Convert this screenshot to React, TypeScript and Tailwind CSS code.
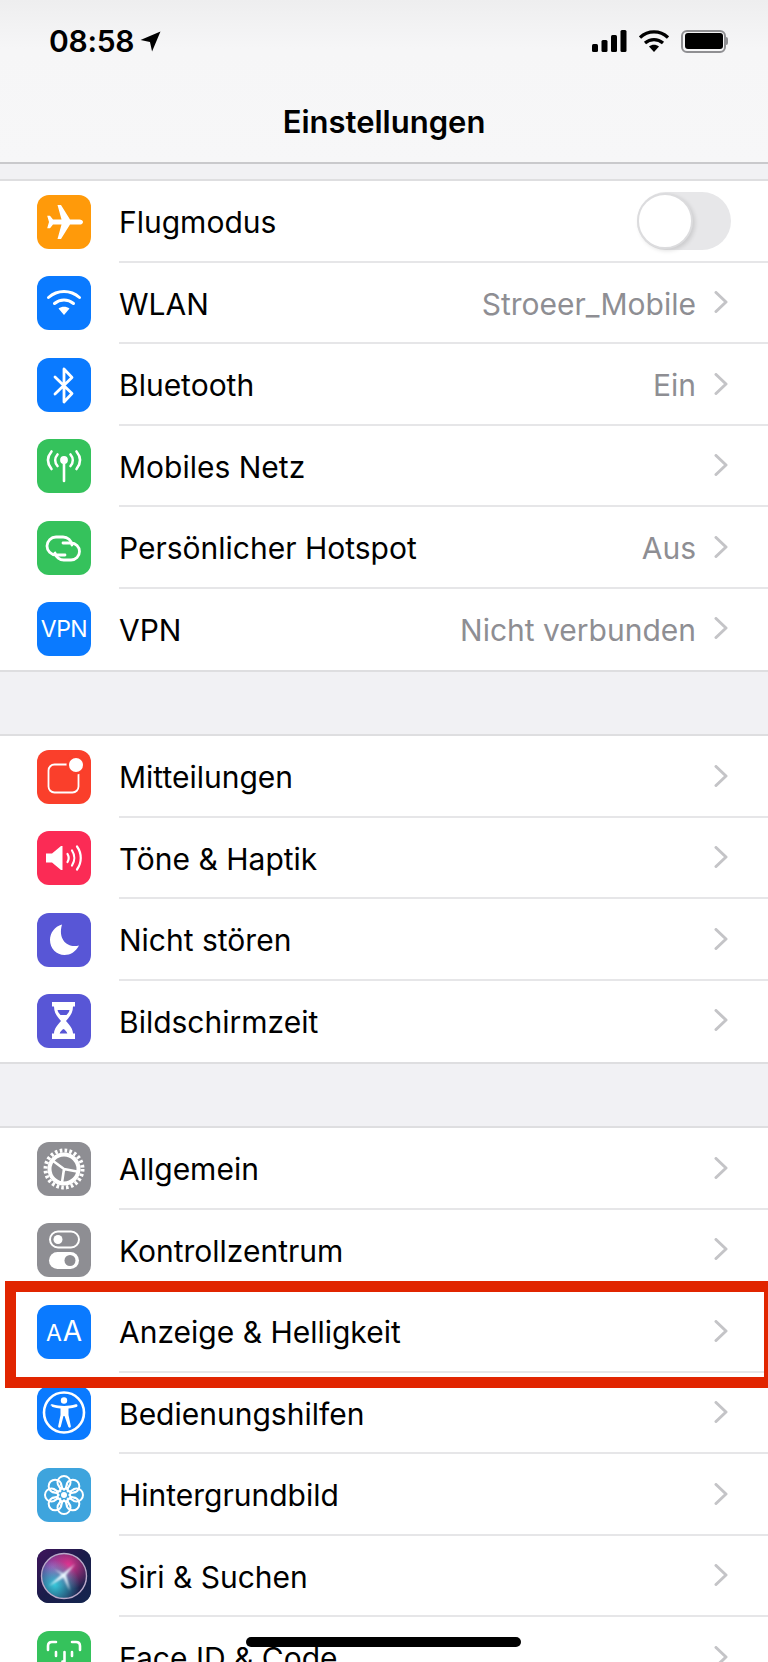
import type { ReactNode } from 'react';

// ─── Icon artwork, all on a 54x54 tile ───────────────────────────────────────

const line = { fill: 'none', stroke: 'white', strokeLinecap: 'round', strokeLinejoin: 'round' } as const;

const Plane = () => (
  <path fill="white" d="M46 27c0-1.600-1.600-2.600-3.500-2.600H33L24 10h-3.500l4 14.400H16l-3-3.700h-2.800l1.800 6.300-1.800 6.300H13l3-3.700h8.500l-4 14.400H24l9-14.400h9.500C44.400 29.600 46 28.600 46 27z" />
);

const Wifi = () => (
  <g {...line} strokeWidth={3}>
    <path d="M11.500 21.500c9-8 22-8 31 0" />
    <path d="M17.500 27.500c5.500-4.700 13.500-4.700 19 0" />
    <path fill="white" stroke="none" d="M21.500 32.500c3.200-2.500 7.800-2.500 11 0L27 39z" />
  </g>
);

const Bluetooth = () => <path {...line} strokeWidth={2.8} d="M18 19l17 16.500L27 44V11l8 8.500L18 36" />;

const Antenna = () => (
  <g {...line} strokeWidth={2.6}>
    <circle cx="27" cy="21" r="2.600" fill="white" />
    <path d="M27 22v20" />
    <path d="M20.500 15.500c-3 3.500-3 8 0 11.500M33.500 15.500c3 3.500 3 8 0 11.500" />
    <path d="M14.500 12.500c-4.500 5.500-4.500 12 0 17.500M39.500 12.500c4.500 5.500 4.500 12 0 17.500" />
  </g>
);

const Hotspot = () => (
  <g {...line} strokeWidth={2.8}>
    <path d="M28 34H19a9 9 0 0 1 0-18h7a9 9 0 0 1 9 8" />
    <path d="M26 22h8a8.500 8.500 0 0 1 0 17h-7a9 9 0 0 1-9-7" />
  </g>
);

const Bell = () => (
  <g>
    <rect x="11.500" y="14.500" width="30" height="28" rx="6" fill="none" stroke="white" strokeWidth="1.800" />
    <circle cx="39" cy="15" r="9.500" fill="#fa3f2b" />
    <circle cx="39" cy="15" r="7" fill="white" />
  </g>
);

const Sound = () => (
  <g>
    <path fill="white" d="M9 22.500h6l9-7.500h1.500v24H24l-9-7.500H9z" />
    <g {...line} strokeWidth={2.2}>
      <path d="M30.500 23c1.500 2.500 1.500 5.500 0 8" />
      <path d="M35 19.500c3 4.500 3 10.500 0 15" />
      <path d="M40 15.500c5 7 5 16 0 23" />
    </g>
  </g>
);

const Moon = () => (
  <path fill="white" d="M25 11.500C17.500 13.500 13 20 13 27c0 8.500 6.500 15 14.500 15 6 0 11-3 14.500-9.500C31 35.500 20.500 27 25 11.500z" />
);

const Hourglass = () => (
  <g>
    <path fill="white" d="M15 8h23v4.500h-2c0 6.500-3.500 10.500-7 14.500 3.500 4 7 8 7 12.500h2V45H15v-5.500h2c0-4.500 3.500-8.500 7-12.500-3.500-4-7-8-7-14.500h-2z" />
    <path fill="#5856d6" d="M20.500 16h12c-.5 2-1.500 3.500-3 5h-6c-1.500-1.500-2.500-3-3-5zM26.500 35c-1.700 1-3.200 2.500-3.800 4.500h7.600c-.6-2-2.100-3.500-3.800-4.500z" />
  </g>
);

const Gear = () => (
  <g fill="none" stroke="white">
    <circle cx="27" cy="27" r="18.500" strokeWidth="4" strokeDasharray="2.600 2.243" />
    <circle cx="27" cy="27" r="14.500" strokeWidth="4" />
    <path strokeWidth="2.600" d="M27 27l13 2.500M27 27l-2 13.500M27 27L15.500 18.500" />
  </g>
);

const Toggles = () => (
  <g>
    <rect x="13" y="8.500" width="29" height="16" rx="8" fill="none" stroke="white" strokeWidth="2" />
    <circle cx="21" cy="16.500" r="4.500" fill="white" />
    <rect x="12" y="29" width="30" height="17" rx="8.500" fill="white" />
    <circle cx="33" cy="37.500" r="5.500" fill="#8e8e93" />
  </g>
);

const Accessibility = () => (
  <g>
    <circle cx="27" cy="26.500" r="20" {...line} strokeWidth={2.6} />
    <circle cx="27" cy="14.500" r="3.200" fill="white" />
    <path fill="white" d="M13.500 19.500c0-1 1-1.500 1.800-1.200 7.500 2.300 16 2.300 23.400 0 .8-.3 1.800.2 1.800 1.200 0 .7-.4 1.200-1 1.400-2.700.9-5.500 1.500-8 1.700v6.400l2.300 11c.2 1-.3 1.700-1.200 1.700-.7 0-1.200-.5-1.400-1.200L27.500 30h-1L23.800 40.500c-.2.700-.7 1.200-1.400 1.200-.9 0-1.400-.7-1.200-1.700l2.300-11v-6.400c-2.500-.2-5.300-.8-8-1.700-.6-.2-1-.7-1-1.400z" />
  </g>
);

const Flower = () => (
  <g fill="none" stroke="white" strokeWidth="2">
    {[0, 45, 90, 135, 180, 225, 270, 315].map((deg) => (
      <g key={deg} transform={`rotate(${deg} 27 27)`}>
        <circle cx="27" cy="14.500" r="6.500" />
        <path strokeWidth="1.400" d="M27 22.500l-3.500-6.500M27 22.500l3.500-6.500" />
      </g>
    ))}
    <circle cx="27" cy="27" r="3" fill="white" stroke="none" />
  </g>
);

const Siri = () => (
  <g>
    <defs>
      <linearGradient id="siriBg" x1="0" y1="0" x2="1" y2="1">
        <stop offset="0" stopColor="#40145c" />
        <stop offset="0.5" stopColor="#1a1c4a" />
        <stop offset="1" stopColor="#14264f" />
      </linearGradient>
      <radialGradient id="siriPink" cx="0.6" cy="0.25" r="0.55">
        <stop offset="0" stopColor="#e0338f" />
        <stop offset="1" stopColor="#e0338f" stopOpacity="0" />
      </radialGradient>
      <radialGradient id="siriBlue" cx="0.3" cy="0.7" r="0.55">
        <stop offset="0" stopColor="#35c6d8" />
        <stop offset="1" stopColor="#35c6d8" stopOpacity="0" />
      </radialGradient>
      <radialGradient id="siriPurple" cx="0.25" cy="0.3" r="0.5">
        <stop offset="0" stopColor="#9a4fc0" />
        <stop offset="1" stopColor="#9a4fc0" stopOpacity="0" />
      </radialGradient>
      <filter id="siriGlow">
        <feGaussianBlur stdDeviation="1" />
      </filter>
    </defs>
    <rect width="54" height="54" fill="url(#siriBg)" />
    <circle cx="27" cy="27" r="22.500" fill="#20224f" />
    <circle cx="27" cy="27" r="22.500" fill="url(#siriPurple)" />
    <circle cx="27" cy="27" r="22.500" fill="url(#siriPink)" />
    <circle cx="27" cy="27" r="22.500" fill="url(#siriBlue)" />
    <circle cx="27" cy="27" r="22.500" fill="none" stroke="#b9a9c9" strokeWidth="1.400" />
    <path filter="url(#siriGlow)" fill="#e9f7ff" d="M38 15L29 26l4 16-6.500-13.500L12 37l12.500-11.500L17 20l9 4.500z" />
  </g>
);

const FaceId = () => (
  <g {...line} strokeWidth={2.6}>
    <path d="M11 19v-4c0-2.500 1.500-4 4-4h4M35 11h4c2.500 0 4 1.500 4 4v4M11 35v4c0 2.500 1.500 4 4 4h4M35 43h4c2.500 0 4-1.500 4-4v-4" />
    <path d="M19 21v4M35 21v4M27.500 21v9.500h-2M20 35.500c4 3 10 3 14 0" />
  </g>
);

// ─── Rows ────────────────────────────────────────────────────────────────────

function Tile({ bg, children }: { bg: string; children: ReactNode }) {
  return (
    <div className={`flex h-[54px] w-[54px] shrink-0 items-center justify-center overflow-hidden rounded-[12px] text-white ${bg}`}>
      {children}
    </div>
  );
}

const svg = (art: ReactNode) => (
  <svg viewBox="0 0 54 54" className="h-[54px] w-[54px]">{art}</svg>
);

function Chevron() {
  return (
    <svg viewBox="0 0 14 22" className="ml-[18px] h-[22px] w-[14px] shrink-0">
      <path d="M2 1.500L12 11 2 20.500" fill="none" stroke="#c4c4c7" strokeWidth="3" strokeLinecap="round" strokeLinejoin="round" />
    </svg>
  );
}

function Toggle() {
  return (
    <div className="flex h-[58px] w-[94px] shrink-0 items-center rounded-full bg-[#e7e7e9]">
      <div className="h-[56px] w-[56px] rounded-full border-2 border-[#dcdcde] bg-white shadow-[2px_2px_4px_rgba(0,0,0,0.12)]" />
    </div>
  );
}

type RowData = { icon: ReactNode; label: string; value?: string; toggle?: boolean };

function Row({ row, last }: { row: RowData; last: boolean }) {
  return (
    <div className="flex h-[81.5px] items-center pl-[37px]">
      {row.icon}
      <div className={`ml-[28px] flex h-full min-w-0 flex-1 items-center border-b-2 ${row.toggle ? 'pr-[37px]' : 'pr-[40px]'} ${last ? 'border-transparent' : 'border-[#e6e6e8]'}`}>
        <span className="flex-1 whitespace-nowrap pt-[3px] text-[30px] leading-[38px] text-black">{row.label}</span>
        {row.value && <span className="whitespace-nowrap pt-[3px] text-[30px] leading-[38px] text-[#8e8e93]">{row.value}</span>}
        {row.toggle ? <Toggle /> : <Chevron />}
      </div>
    </div>
  );
}

function Group({ rows, clip }: { rows: RowData[]; clip?: boolean }) {
  return (
    <div className={`border-y-2 border-[#dedee0] bg-white ${clip ? 'border-b-0' : ''}`}>
      {rows.map((row, i) => (
        <Row key={row.label} row={row} last={i === rows.length - 1} />
      ))}
    </div>
  );
}

const network: RowData[] = [
  { icon: <Tile bg="bg-[#ff9a0a]">{svg(<Plane />)}</Tile>, label: 'Flugmodus', toggle: true },
  { icon: <Tile bg="bg-[#0a7aff]">{svg(<Wifi />)}</Tile>, label: 'WLAN', value: 'Stroeer_Mobile' },
  { icon: <Tile bg="bg-[#0a7aff]">{svg(<Bluetooth />)}</Tile>, label: 'Bluetooth', value: 'Ein' },
  { icon: <Tile bg="bg-[#35c25c]">{svg(<Antenna />)}</Tile>, label: 'Mobiles Netz' },
  { icon: <Tile bg="bg-[#35c25c]">{svg(<Hotspot />)}</Tile>, label: 'Persönlicher Hotspot', value: 'Aus' },
  {
    icon: <Tile bg="bg-[#0a7aff]"><span className="text-[23px] leading-[28px] tracking-[-0.5px]">VPN</span></Tile>,
    label: 'VPN',
    value: 'Nicht verbunden',
  },
];

const notifications: RowData[] = [
  { icon: <Tile bg="bg-[#fa3f2b]">{svg(<Bell />)}</Tile>, label: 'Mitteilungen' },
  { icon: <Tile bg="bg-[#fb2b55]">{svg(<Sound />)}</Tile>, label: 'Töne & Haptik' },
  { icon: <Tile bg="bg-[#5856d6]">{svg(<Moon />)}</Tile>, label: 'Nicht stören' },
  { icon: <Tile bg="bg-[#5856d6]">{svg(<Hourglass />)}</Tile>, label: 'Bildschirmzeit' },
];

const general: RowData[] = [
  { icon: <Tile bg="bg-[#8e8e93]">{svg(<Gear />)}</Tile>, label: 'Allgemein' },
  { icon: <Tile bg="bg-[#8e8e93]">{svg(<Toggles />)}</Tile>, label: 'Kontrollzentrum' },
  {
    icon: (
      <Tile bg="bg-[#0a7aff]">
        <span className="flex items-baseline gap-px leading-[32px]">
          <span className="text-[23px]">A</span>
          <span className="text-[28px]">A</span>
        </span>
      </Tile>
    ),
    label: 'Anzeige & Helligkeit',
  },
  { icon: <Tile bg="bg-[#0a7aff]">{svg(<Accessibility />)}</Tile>, label: 'Bedienungshilfen' },
  { icon: <Tile bg="bg-[#3ea4dd]">{svg(<Flower />)}</Tile>, label: 'Hintergrundbild' },
  { icon: <Tile bg="bg-[#14264f]">{svg(<Siri />)}</Tile>, label: 'Siri & Suchen' },
  { icon: <Tile bg="bg-[#35c25c]">{svg(<FaceId />)}</Tile>, label: 'Face ID & Code' },
];

function StatusBar() {
  return (
    <div className="flex h-[82px] items-center justify-between pl-[49px] pr-[40px]">
      <div className="flex items-center gap-[6px]">
        <span className="text-[30px] font-semibold leading-[36px] tracking-[-0.3px] text-black">08:58</span>
        <svg viewBox="0 0 20 20" className="h-[21px] w-[21px]">
          <path d="M19.500.5L11.500 19.500 9.500 10.500.5 8.500z" fill="black" />
        </svg>
      </div>
      <div className="flex items-center gap-[12px]">
        <svg viewBox="0 0 35 22" className="h-[22px] w-[35px]">
          <rect x="0" y="14" width="6" height="8" rx="1.500" />
          <rect x="9.500" y="10" width="6" height="12" rx="1.500" />
          <rect x="19" y="5" width="6" height="17" rx="1.500" />
          <rect x="28.500" y="0" width="6" height="22" rx="1.500" />
        </svg>
        <svg viewBox="0 0 30 22" className="h-[22px] w-[30px]">
          <path d="M1 7.500c8-7.500 20-7.500 28 0" fill="none" stroke="black" strokeWidth="3.200" />
          <path d="M6 13c5.200-4.600 12.800-4.600 18 0" fill="none" stroke="black" strokeWidth="3.200" />
          <path d="M10 16.500c3-2.400 7-2.400 10 0L15 22z" fill="black" />
        </svg>
        <div className="flex items-center">
          <div className="flex h-[23px] w-[45px] items-center justify-center rounded-[6px] border-2 border-[#8f8f92]">
            <div className="h-[16px] w-[38px] rounded-[3px] bg-black" />
          </div>
          <div className="h-[8px] w-[2px] rounded-r-full bg-[#8f8f92]" />
        </div>
      </div>
    </div>
  );
}

export default function App() {
  return (
    <div className="relative h-[1662px] w-full overflow-hidden bg-[#f1f1f4] font-['Inter',sans-serif]">
      <header className="h-[164px] border-b-2 border-[#c9c9cc] bg-linear-to-b from-[#eeeeef] via-[#f6f6f7] via-30% to-[#f7f7f8]">
        <StatusBar />
        <h1 className="flex h-[80px] items-center justify-center text-[31px] font-semibold text-black">
          Einstellungen
        </h1>
      </header>

      <div className="mt-[15px] flex flex-col gap-[62px]">
        <Group rows={network} />
        <Group rows={notifications} />
        <Group rows={general} clip />
      </div>

      {/* Markierung und Home-Balken liegen über der Liste */}
      <div className="absolute left-[5px] top-[1281px] h-[107px] w-[770px] border-[11px] border-[#e12500]" />
      <div className="absolute left-[246px] top-[1637px] h-[10px] w-[275px] rounded-full bg-black" />
    </div>
  );
}
